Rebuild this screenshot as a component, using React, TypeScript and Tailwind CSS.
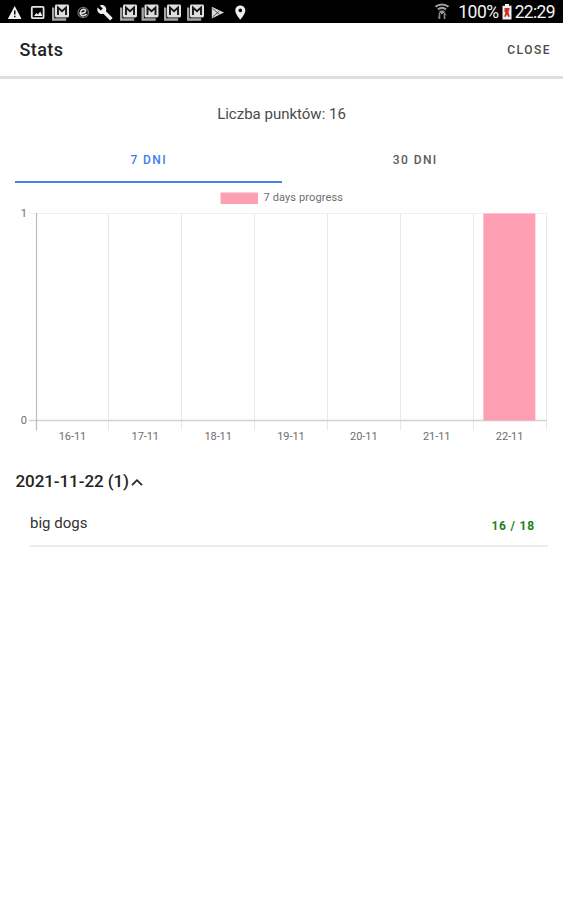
import { useState } from "react";

const days = [
  { label: "16-11", value: 0 },
  { label: "17-11", value: 0 },
  { label: "18-11", value: 0 },
  { label: "19-11", value: 0 },
  { label: "20-11", value: 0 },
  { label: "21-11", value: 0 },
  { label: "22-11", value: 1 },
];

const tabs = ["7 dni", "30 dni"];

function MailIcon({ x }: { x: number }) {
  return (
    <g transform={`translate(${x} 4)`}>
      <path d="M1.2 3.5v12h13" fill="none" stroke="#a4a4a4" strokeWidth="2.4" />
      <rect x="3" y="0.5" width="14" height="13" rx="1.4" fill="#dedede" />
      <path d="M6 11V3.6l4 3.6 4-3.6V11" fill="none" stroke="#161616" strokeWidth="1.9" />
    </g>
  );
}

function StatusIcons() {
  return (
    <svg className="h-[23px] w-[250px]" viewBox="0 0 250 23" fill="#f1f1f1">
      {/* warning */}
      <path d="M14.7 6 21.6 19H7.8z" />
      <path d="M14 10.5h1.5v4H14zM14 15.8h1.5v1.5H14z" fill="#000" />
      {/* picture */}
      <rect x="31.8" y="6.8" width="11.8" height="11.4" rx="1" fill="none" stroke="#e4e4e4" strokeWidth="1.8" />
      <path d="m34 16 2.4-3 1.6 1.6 2.2-3 2.2 4.4z" />
      <MailIcon x={52} />
      {/* e badge */}
      <circle cx="83.2" cy="12.5" r="5.2" fill="none" stroke="#6f6f6f" strokeWidth="1.2" />
      <path
        d="M80.2 13.2c3 .2 5.6-.8 5.4-2.6-.2-1.9-3.5-1.7-4.7.3-1.3 2.2-.3 4.9 2 4.9 1.6 0 2.6-.7 3.6-1.6"
        fill="none"
        stroke="#dcdcdc"
        strokeWidth="1.7"
      />
      {/* wrench */}
      <path
        transform="translate(96.6 4.3) scale(.69)"
        d="m22.7 19-9.1-9.1c.9-2.3.4-5-1.5-6.9-2-2-5-2.4-7.4-1.3L9 6 6 9 1.6 4.7C.4 7.1.9 10.1 2.9 12.1c1.9 1.9 4.6 2.4 6.9 1.5l9.1 9.1c.4.4 1 .4 1.4 0l2.3-2.3c.5-.4.5-1.1.1-1.4z"
      />
      <MailIcon x={120} />
      <MailIcon x={141.5} />
      <MailIcon x={164} />
      <MailIcon x={187} />
      {/* play store */}
      <path d="M211.8 6.8 224 12.5l-12.2 6z" fill="#d8d8d8" />
      <path d="m212.5 8.5 7 6m-7 2.5 7-6" stroke="#444" strokeWidth="0.9" />
      {/* pin */}
      <path d="M240.3 5.5c-2.9 0-5 2.2-5 5 0 3.6 5 9.2 5 9.2s5-5.6 5-9.2c0-2.8-2.2-5-5-5z" />
      <circle cx="240.3" cy="10.4" r="1.8" fill="#000" />
    </svg>
  );
}

function StatusBar() {
  return (
    <div className="flex h-[23px] items-center justify-between bg-black pr-[8px] text-[#f4f4f4]">
      <StatusIcons />
      <div className="flex items-center">
        <svg className="mr-[8px] h-[23px] w-4" viewBox="0 0 16 23" fill="none" stroke="#a0a0a0">
          <path d="M1.5 6.8C5 3.7 11 3.7 14.5 6.8M4 9.4c2.4-1.9 5.6-1.9 8 0" strokeWidth="2.2" />
          <path d="M5.6 11.6c1-.9 3.8-.9 4.8 0L8 13.8z" fill="#a0a0a0" />
          <path d="M5.5 12.5v6.5M10.5 12.5v6.5" stroke="#8a8a8a" strokeWidth="1.6" />
          <path d="m3.8 16.8 1.7 1.8m5-5.2 1.8 1.9" stroke="#8a8a8a" />
        </svg>
        <span className="pt-[2px] text-[17.5px] leading-[21px] tracking-[-0.45px]">100%</span>
        <svg className="mr-[3px] ml-[3px] h-[23px] w-[10px]" viewBox="0 0 10 23">
          <path d="M3 4h4v1.8h2.5V19.5H.5V5.8H3z" fill="#f2f2f2" />
          <path d="M2.5 8h5v1.6L6.4 12l1.4 4.6-1.5.3L5 14.4 3.6 17l-1.5-.6 1.5-3.8-1.1-.5z" fill="#d52b1e" />
        </svg>
        <span className="pt-[2px] text-[17.5px] leading-[21px] tracking-[-0.65px]">22:29</span>
      </div>
    </div>
  );
}

function ProgressChart() {
  const left = 36.5;
  const step = 72.86;
  const top = 30.5;
  const bottom = 237.5;
  return (
    <svg
      className="block h-[264px] w-[563px] text-[11px]"
      viewBox="0 0 563 264"
      fill="#6e6e6e"
    >
      <rect x="220.5" y="9.5" width="37.5" height="11.5" fill="#ff9fb3" />
      <text x="263.5" y="18" textLength="79.5">
        7 days progress
      </text>
      <path d="M29 30.5h517.5" stroke="#f0f0f0" />
      {days.map((day, i) => (
        <g key={day.label}>
          <path d={`M${Math.round(left + step * (i + 1)) - 0.5} 30v217.5`} stroke="#e8e8e8" />
          <text x={left + step * (i + 0.5) - 0.5} y="257" textAnchor="middle" textLength="27.5">
            {day.label}
          </text>
        </g>
      ))}
      <path d="M29 237.5h517.5" stroke="#d2d2d2" strokeWidth="1.5" />
      <path d="M36.5 30v217.5" stroke="#bdbdbd" strokeWidth="1.2" />
      {days.map((day, i) => (
        <rect
          key={day.label}
          x={left + step * i + 9.7}
          y={bottom - (bottom - top) * day.value}
          width="52"
          height={(bottom - top) * day.value}
          fill="#ff9fb3"
        />
      ))}
      <text x="27" y="34" textAnchor="end">
        1
      </text>
      <text x="27" y="241" textAnchor="end">
        0
      </text>
    </svg>
  );
}

export default function App() {
  const [tab, setTab] = useState(0);
  const [open, setOpen] = useState(true);

  return (
    <div className="h-[900px] w-[563px] overflow-hidden bg-white font-['Roboto',sans-serif] text-[#222]">
      <StatusBar />
      <header className="flex h-[56px] items-center justify-between border-b-[3px] border-[#dedede] pr-[12px] pl-[19.5px]">
        <h1 className="text-[18px] font-medium tracking-[0.4px]">Stats</h1>
        <button className="text-[12px] font-medium tracking-[1.5px] text-[#4a4a4a]">CLOSE</button>
      </header>
      <p className="pt-[25px] text-center text-[15px] leading-5 text-[#4a4a4a]">Liczba punktów: 16</p>
      {/* Tabs */}
      <div className="mt-[14px] flex h-[45px] px-[15px]">
        {tabs.map((name, i) => (
          <button
            key={name}
            className={`flex-1 border-b-2 pt-px pl-px text-[12px] font-medium tracking-[1.4px] uppercase ${
              tab === i ? "border-[#4c7fe8] text-[#3f7cf0]" : "border-transparent text-[#5c5c5c]"
            }`}
            onClick={() => setTab(i)}
          >
            {name}
          </button>
        ))}
      </div>
      <ProgressChart />
      <button
        className="mt-[23px] ml-[15.5px] flex h-6 items-center text-[17px] font-medium tracking-[-0.08px]"
        onClick={() => setOpen(!open)}
      >
        2021-11-22 (1)
        <svg
          className={`ml-[2px] h-[7px] w-[12px] ${open ? "" : "rotate-180"}`}
          viewBox="0 0 12 7"
          fill="none"
          stroke="currentColor"
          strokeWidth="1.7"
        >
          <path d="m1 6.2 5-5 5 5" />
        </svg>
      </button>
      {open && (
        <div className="mr-[15px] ml-[30px] flex h-[53px] items-center justify-between border-b-2 border-[#ececec] pr-[13px]">
          <span className="pt-[7px] text-[15px] text-[#333]">big dogs</span>
          <span className="pt-[13px] text-[12px] font-bold tracking-[0.8px] text-[#1c821c]">16 / 18</span>
        </div>
      )}
    </div>
  );
}
